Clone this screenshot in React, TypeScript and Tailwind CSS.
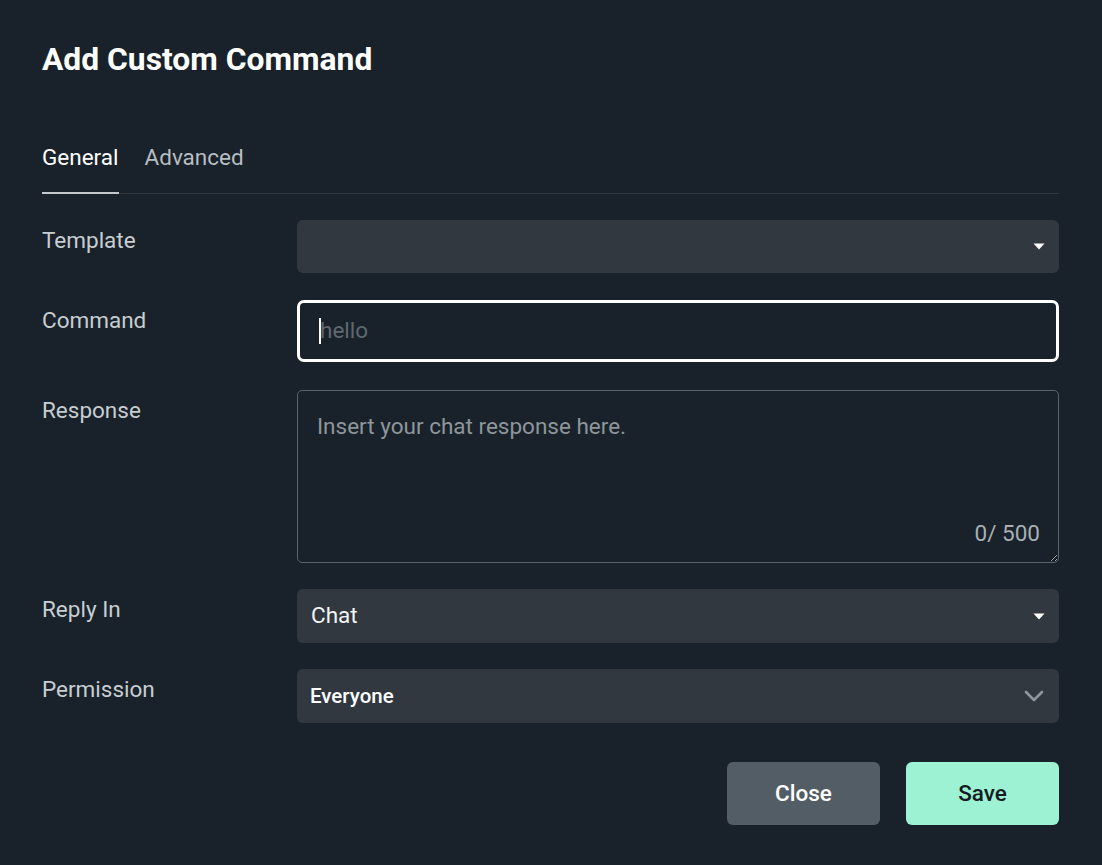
const Caret = () => (
  <svg width="12" height="7" viewBox="0 0 12 7" className="shrink-0">
    <path d="M0.5 0.5 H11.5 L6 6.5 Z" fill="#ffffff" />
  </svg>
);

const Chevron = () => (
  <svg width="22" height="14" viewBox="0 0 22 14" className="shrink-0">
    <path d="M3 3 L11 11 L19 3" fill="none" stroke="#8f969c" strokeWidth="2.6" strokeLinecap="round" strokeLinejoin="round" />
  </svg>
);

export default function App() {
  return (
    <div
      className="w-[1102px] h-[865px] bg-[#19222a] text-white px-[42px] pt-[38px]"
      style={{ fontFamily: "Roboto, 'Noto Sans', sans-serif" }}
    >
      {/* Title */}
      <h2 className="text-[31.8px] leading-[42px] font-bold">Add Custom Command</h2>

      {/* Tabs */}
      <div className="mt-[60px] w-[1017px] flex border-b border-[#2f383f]">
        <div className="pb-[22px] pt-[4px] border-b-2 border-[#c4c8cc] -mb-px text-[22.5px] leading-[26px] text-white">
          General
        </div>
        <div className="ml-[26px] pb-[22px] pt-[4px] text-[22.5px] leading-[26px] text-[#b8bdc2]">Advanced</div>
      </div>

      {/* Template */}
      <div className="mt-[26px] flex">
        <div className="w-[255px] pt-[7px] text-[22.5px] leading-[26px] text-[#c8cdd1]">Template</div>
        <div className="w-[762px] h-[53px] rounded-[6px] bg-[#31383f] flex items-center justify-end pr-[14px]">
          <Caret />
        </div>
      </div>

      {/* Command */}
      <div className="mt-[27px] flex">
        <div className="w-[255px] pt-[7px] text-[22.5px] leading-[26px] text-[#c8cdd1]">Command</div>
        <div className="w-[762px] h-[62px] rounded-[7px] border-[3px] border-white flex items-center pl-[19px]">
          <span className="w-[2px] h-[26px] bg-white" />
          <span className="text-[22.5px] text-[#5f686f] -ml-[1px]">hello</span>
        </div>
      </div>

      {/* Response */}
      <div className="mt-[28px] flex">
        <div className="w-[255px] pt-[7px] text-[22.5px] leading-[26px] text-[#c8cdd1]">Response</div>
        <div className="relative w-[762px] h-[173px]">
          <textarea
            placeholder="Insert your chat response here."
            className="w-full h-full rounded-[5px] border border-[#5b646b] bg-transparent px-[19px] pt-[22px] text-[22.5px] leading-[26px] text-white placeholder:text-[#8e959b] outline-none [color-scheme:dark] resize"
          />
          <span className="absolute right-[19px] bottom-[17px] text-[22.5px] leading-[26px] text-[#a9afb4]">0/ 500</span>
        </div>
      </div>

      {/* Reply In */}
      <div className="mt-[26px] flex">
        <div className="w-[255px] pt-[7px] text-[22.5px] leading-[26px] text-[#c8cdd1]">Reply In</div>
        <div className="w-[762px] h-[54px] rounded-[6px] bg-[#31383f] flex items-center justify-between pl-[14px] pr-[14px]">
          <span className="text-[22.5px] text-[#f2f4f5]">Chat</span>
          <Caret />
        </div>
      </div>

      {/* Permission */}
      <div className="mt-[26px] flex">
        <div className="w-[255px] pt-[7px] text-[22.5px] leading-[26px] text-[#c8cdd1]">Permission</div>
        <div className="w-[762px] h-[54px] rounded-[6px] bg-[#31383f] flex items-center justify-between pl-[13px] pr-[14px]">
          <span className="text-[20.5px] font-medium text-white">Everyone</span>
          <Chevron />
        </div>
      </div>

      {/* Actions */}
      <div className="mt-[39px] w-[1017px] flex justify-end gap-[26px]">
        <button className="w-[153px] h-[63px] rounded-[6px] bg-[#535d65] text-[22.5px] font-medium text-white">
          Close
        </button>
        <button className="w-[153px] h-[63px] rounded-[6px] bg-[#9cf2d3] text-[22.5px] font-medium text-[#141c22]">
          Save
        </button>
      </div>
    </div>
  );
}
